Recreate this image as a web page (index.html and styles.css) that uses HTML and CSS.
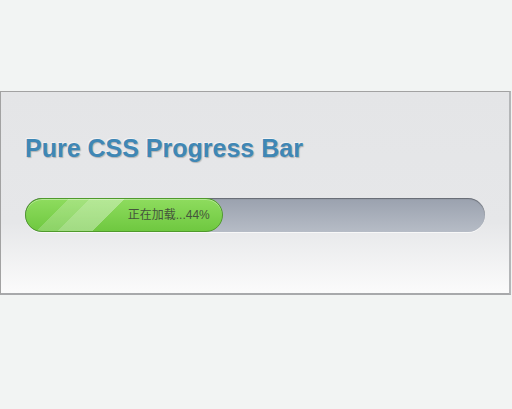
FILE: index.html
```html
<!DOCTYPE html>
<html lang="zh-CN">
<head>
  <meta charset="UTF-8" />
  <meta name="viewport" content="width=device-width, initial-scale=1.0" />
  <title>Pure CSS Progress Bar</title>
  <link rel="stylesheet" href="styles.css">
</head>
<body>
  <div class="panel">
    <h1>Pure CSS Progress Bar</h1>
    <div class="track">
      <div class="bar" style="width:43%;">
        <span>正在加载...44%</span>
      </div>
    </div>
  </div>
</body>
</html>
```

FILE: styles.css
```css
body { margin: 0; background: #f2f4f3; font-family: "Liberation Sans", Arial, sans-serif; }
.panel {
  margin-top: 91px;
  width: 511px;
  height: 204px;
  padding: 0 24px;
  box-sizing: border-box;
  border: 1px solid #a2a2a2;
  border-bottom: 2px solid #a8a9ab;
  border-right: 2px solid #b4b6b8;
  background: linear-gradient(#e4e5e7 0%, #e6e7e9 65%, #fbfbfb 100%);
  overflow: hidden;
}
h1 {
  margin: 42px 0 0;
  font-size: 25px;
  line-height: 29px;
  color: #3f87b5;
  text-shadow: 1px 1px 1px rgba(0,0,0,0.22), -1px -1px 0 rgba(255,255,255,0.5);
}
.track {
  margin-top: 35px;
  height: 34px;
  border-radius: 17px;
  background: linear-gradient(#9aa1ae, #b6bcc6);
  box-shadow: inset 0 1px 1px rgba(0,0,0,0.35), 0 1px 0 #f8f8f8;
}
.bar {
  height: 34px;
  box-sizing: border-box;
  border: 1px solid #4f9a2c;
  border-radius: 17px;
  background:
    linear-gradient(135deg, transparent 0 30px, rgba(255,255,255,0.2) 30px 45px, rgba(255,255,255,0.35) 45px 70px, transparent 70px),
    linear-gradient(#8edc5e, #6fc840);
  box-shadow: inset 0 1px 0 rgba(255,255,255,0.35);
  text-align: right;
  padding-right: 12px;
}
.bar span {
  display: inline-block;
  font-family: "Liberation Sans", "Noto Sans CJK SC", sans-serif;
  font-size: 12px;
  line-height: 32px;
  color: #45553c;
}
```
